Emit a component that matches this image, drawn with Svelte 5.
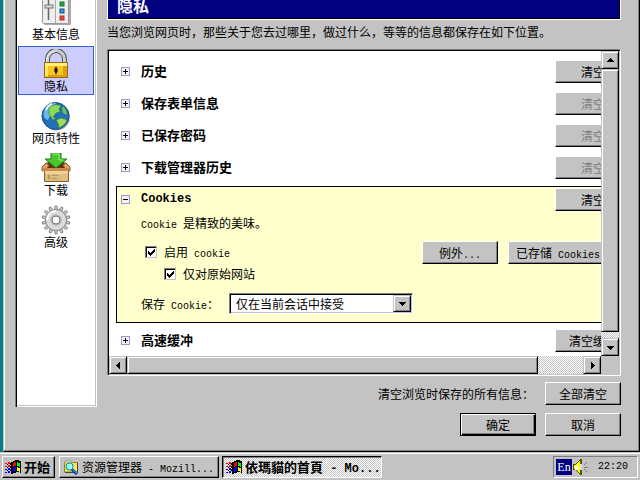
<script lang="ts">
  const categories = [
    { id: 'basic', label: '基本信息' },
    { id: 'privacy', label: '隐私' },
    { id: 'web', label: '网页特性' },
    { id: 'downloads', label: '下载' },
    { id: 'advanced', label: '高级' }
  ];

  const sections = [
    { title: '历史', disabled: false },
    { title: '保存表单信息', disabled: true },
    { title: '已保存密码', disabled: true },
    { title: '下载管理器历史', disabled: true }
  ];

  let selected = 'privacy';
  let enableCookies = true;
  let originalOnly = true;

  const teeth = Array.from({ length: 14 }, (_, i) => (i * 360) / 14);
</script>

{#snippet flag()}
  <svg class="flag" width="17" height="16" viewBox="0 0 17 16" shape-rendering="crispEdges" aria-hidden="true">
    <path fill="#000" d="M6 3h2V2h2V1h4v1h2v12h-1v-1h-4v1H8v1H6z" />
    <path fill="#f00" d="M8 4h1V3h2v4H9v1H8zM0 4h2v1H0zM3 3h2v2H3zM0 7h2v1H0zM3 6h2v2H3z" />
    <path fill="#0f0" d="M12 3h1v1h2v4h-1V7h-2z" />
    <path fill="#00f" d="M8 9h1V8h2v4H9v1H8zM0 10h2v1H0zM3 9h2v2H3zM0 13h2v1H0zM3 12h2v2H3z" />
    <path fill="#ff0" d="M12 8h1v1h2v4h-1v-1h-2z" />
    <path fill="#000" d="M2 5h1v1H2zM5 4h1v2H5zM2 8h1v1H2zM5 7h1v2H5zM2 11h1v1H2zM5 10h1v2H5z" />
  </svg>
{/snippet}

{#snippet arrow(dir)}
  <svg width="7" height="7" viewBox="0 0 7 7" shape-rendering="crispEdges" aria-hidden="true">
    {#if dir === 'up'}
      <path d="M3 1h1v1h1v1h1v1h1v1H0V4h1V3h1V2h1z" />
    {:else if dir === 'down'}
      <path d="M0 2h7v1H6v1H5v1H4v1H3V5H2V4H1V3H0z" />
    {:else if dir === 'left'}
      <path d="M5 0v7H4V6H3V5H2V4H1V3h1V2h1V1h1V0z" />
    {:else}
      <path d="M2 0h1v1h1v1h1v1h1v1H5v1H4v1H3v1H2z" />
    {/if}
  </svg>
{/snippet}

{#snippet toggle(open, name)}
  <button class="toggle" aria-expanded={open} aria-label={name}>
    <svg width="9" height="9" viewBox="0 0 9 9" shape-rendering="crispEdges">
      <rect width="9" height="9" fill="#9a9ad0" />
      <rect x="1" y="1" width="7" height="7" fill="#f2f2f6" />
      <path d={open ? 'M2 4h5v1H2z' : 'M2 4h5v1H2zM4 2h1v5H4z'} />
    </svg>
  </button>
{/snippet}

<div class="desktop">
  <main class="dialog">
    <div class="panes">
      <nav class="sidebar">
        {#each categories as item}
          <button class="category" class:active={selected === item.id} on:click={() => (selected = item.id)}>
            <svg width="30" height="30" viewBox="0 0 30 30" aria-hidden="true">
              {#if item.id === 'basic'}
                <rect x="3" y="1" width="27" height="27" rx="1" fill="#aaa" />
                <rect x="1.5" y="0.500" width="26" height="26" rx="1" fill="#eee" stroke="#999" />
                <path d="M14.500 1v25" stroke="#aaa" />
                <path d="M7.500 2v21" stroke="#666" stroke-width="1.500" />
                <rect x="4" y="8" width="8" height="3" fill="#ddd" stroke="#777" />
                <rect x="19" y="5" width="4" height="4" fill="#2a2" stroke="#175" />
                <rect x="19" y="12" width="4" height="4" fill="#39e" stroke="#157" />
                <rect x="19" y="19" width="4" height="4" fill="#e43" stroke="#a33" />
              {:else if item.id === 'privacy'}
                <path d="M6.500 15V10.500a8 8.500 0 0 1 17 0V15" fill="none" stroke="#555" stroke-width="5" />
                <path d="M6.500 15V10.500a8 8.500 0 0 1 17 0V15" fill="none" stroke="#ccc" stroke-width="3" />
                <path d="M5.500 15V10.500a9 9 0 0 1 8-8" fill="none" stroke="#fff" />
                <rect x="3.500" y="13.500" width="23" height="15" fill="#f6c622" stroke="#96690a" />
                <path d="M4 14h22v3H4z" fill="#fff27c" />
                <path d="M4 17h3v10H4z" fill="#ffe558" />
                <path d="M22 17h4v11H7v-2h15z" fill="#dea016" />
                <path d="M15 17l2 4-2 5-2-5z" fill="#2c1b00" />
              {:else if item.id === 'web'}
                <circle cx="15.500" cy="16" r="13.500" fill="#aaa" />
                <circle cx="14.500" cy="15" r="13.500" fill="#216fb5" stroke="#184f87" />
                <path d="M3 10C5 4 10 2 15 2l-3 7-5 10c-4-1-5-5-4-9z" fill="#69b9ef" />
                <path d="M8 7c3-4 9-4 12-2l-2 3 1 3-4 1-3 4 3 2-3 1-4-6z" fill="#8cdb55" stroke="#347b32" stroke-width=".6" />
                <path d="M15 19l5-2 4 1 2 2-3 4-5 3-1-5z" fill="#a1dc55" stroke="#347b32" stroke-width=".6" />
                <path d="M22 5l3 4 1 5-4-2-1-4z" fill="#73bf49" />
                <path d="M5 9c1-3 3-5 6-6" stroke="#e3f5ff" fill="none" stroke-width="2" />
              {:else if item.id === 'downloads'}
                <path d="M3 13l4-4h16l4 4v3H3z" fill="#633313" />
                <path d="M1 14l4-4 3 2-3 5-4 1zM29 14l-4-4-3 2 3 5 4 1z" fill="#dca765" stroke="#89592f" />
                <path d="M3.500 17.500h24v11h-24z" fill="#d9bd7c" stroke="#866334" />
                <path d="M4 18h23v3H4z" fill="#f0d497" />
                <path d="M21 22h5v6h-5z" fill="#e7bf80" />
                <path d="M7 22h2v4H7zM11 22h6v1h-6zM11 25h5v1h-5z" fill="#b69559" />
                <path d="M2 15h26v3H2z" fill="#c98b4e" />
                <path d="M10 0h10v6h6L15 15 4 6h6z" fill="#4ac52b" stroke="#198018" />
                <path d="M11 1h7v6h4" stroke="#a5f280" fill="none" />
              {:else}
                {#each teeth as angle}
                  <path d="M13.500 5l.5-4h2l.5 4z" fill="#ccc" stroke="#777" stroke-width=".8" transform="rotate({angle} 15 15)" />
                {/each}
                <circle cx="15" cy="15" r="10.500" fill="#ddd" stroke="#888" />
                <path d="M6 15a9 9 0 0 1 9-9" stroke="#fff" stroke-width="2" fill="none" />
                <circle cx="15" cy="15" r="6" fill="#bbb" />
                <circle cx="15" cy="15" r="4" fill="#fff" stroke="#777" />
              {/if}
            </svg>
            <span>{item.label}</span>
          </button>
        {/each}
      </nav>

      <section class="content">
        <h1>隐私</h1>
        <p class="intro">当您浏览网页时，那些关于您去过哪里，做过什么，等等的信息都保存在如下位置。</p>

        <div class="scroll-box">
          <div class="viewport">
            <div class="sections">
              {#each sections as s}
                <div class="row">
                  {@render toggle(false, s.title)}
                  <h2>{s.title}</h2>
                  <button class="btn" disabled={s.disabled}>清空</button>
                </div>
              {/each}

              <div class="cookies">
                <div class="row">
                  {@render toggle(true, 'Cookies')}
                  <h2 class="mono">Cookies</h2>
                  <button class="btn">清空</button>
                </div>
                <p><span class="mono">{'Cookie '}</span>是精致的美味。</p>
                <div class="options">
                  <div class="checks">
                    <label><input type="checkbox" bind:checked={enableCookies} /><span>启用<span class="mono">{' cookie'}</span></span></label>
                    <label class="sub"><input type="checkbox" bind:checked={originalOnly} disabled={!enableCookies} />仅对原始网站</label>
                  </div>
                  <button class="btn">例外<span class="mono">...</span></button>
                  <button class="btn">已存储<span class="mono">{' Cookies'}</span></button>
                </div>
                <div class="keep">
                  <label for="keep">保存<span class="mono">{' Cookie'}</span>：</label>
                  <div class="combo">
                    <select id="keep">
                      <option>仅在当前会话中接受</option>
                    </select>
                    <span class="drop">{@render arrow('down')}</span>
                  </div>
                </div>
              </div>

              <div class="row">
                {@render toggle(false, '高速缓冲')}
                <h2>高速缓冲</h2>
                <button class="btn">清空缓存</button>
              </div>
            </div>
          </div>
          <div class="bar vertical">
            <button class="step" aria-label="向上">{@render arrow('up')}</button>
            <div class="thumb"></div>
            <div class="trough"></div>
            <button class="step" aria-label="向下">{@render arrow('down')}</button>
          </div>
          <div class="bar horizontal">
            <button class="step" aria-label="向左">{@render arrow('left')}</button>
            <div class="thumb"></div>
            <div class="trough"></div>
            <button class="step" aria-label="向右">{@render arrow('right')}</button>
          </div>
        </div>

        <div class="clear-all">
          <span>清空浏览时保存的所有信息：</span>
          <button class="btn">全部清空</button>
        </div>
      </section>
    </div>

    <div class="actions">
      <button class="btn default">确定</button>
      <button class="btn">取消</button>
    </div>
  </main>

  <footer class="taskbar">
    <button class="task start">{@render flag()}开始</button>
    <button class="task">
      <svg width="17" height="16" viewBox="0 0 17 16" aria-hidden="true">
        <path d="M1.500 13V3.500l2-2h4l2 2h5V13z" fill="#ffe85a" stroke="#8a8520" />
        <path d="M2 3l2-2h3l2 2z" fill="#ddd" stroke="#888" stroke-width=".6" />
        <path d="M14.500 4v9.500H2" stroke="#444" fill="none" />
        <circle cx="6.500" cy="7.500" r="3.600" fill="#9ff" stroke="#088" />
        <path d="M9 10.500l5 4.500" stroke="#003aa8" stroke-width="3" />
        <path d="M9.500 10.500l4.500 4" stroke="#5ae" />
      </svg>
      <span>资源管理器<span class="mono">{' - Mozill...'}</span></span>
    </button>
    <button class="task pressed">
      {@render flag()}
      <span class="trad">依瑪貓的首頁<span class="mono">{' - Mo...'}</span></span>
    </button>
    <div class="tray">
      <span class="ime">En</span>
      <svg width="17" height="16" viewBox="0 0 17 16" shape-rendering="crispEdges" aria-hidden="true">
        <path d="M1 5h3V4h1V3h1V2h1V1h1V0h2v16H8v-1H7v-1H6v-1H5v-1H4v-1H1z" fill="#555500" />
        <path d="M2 6h2V5h1V4h1V3h1V2h1v12H7v-1H6v-1H5v-1H4v-1H2z" fill="#ffff00" />
        <path d="M3 7h2V6h1v5H3z" fill="#fff" />
        <path d="M8 5h2v6H8z" fill="#ddd" />
        <path d="M12 5h1V4h1V3h1v1h-1v1h-1v1h-1zM12 8h4v1h-4zM12 10h1v1h1v1h1v1h-1v-1h-1v-1h-1z" fill="#808080" />
      </svg>
      <time class="mono">22:20</time>
    </div>
  </footer>
</div>

<style>
  :global(body) {
    margin: 0;
    overflow: hidden;
  }

  .desktop {
    display: flex;
    flex-direction: column;
    height: 100vh;
    background: #008080;
    color: #000;
    font-family: 'Noto Sans CJK SC', sans-serif;
    font-size: 12px;
    line-height: 16px;
  }

  button,
  select {
    box-sizing: border-box;
    margin: 0;
    padding: 0;
    font: inherit;
    color: inherit;
    border-radius: 0;
  }

  h1,
  h2,
  p {
    margin: 0;
  }

  svg {
    flex: none;
    display: block;
  }

  .mono {
    font-family: 'Liberation Mono', monospace;
    font-size: 10px;
    line-height: 10px;
    white-space: pre;
  }

  .dialog {
    flex: 1;
    min-height: 0;
    display: flex;
    flex-direction: column;
    margin-left: 3px;
    padding: 0 18px 0 10px;
    background: #c3c3c3;
    border: solid #000;
    border-width: 0 1px 1px 0;
    border-left: 1px solid #c3c3c3;
    box-shadow: inset -1px -1px #808080, inset 1px 0 #fff;
  }

  .panes {
    flex: 1;
    min-height: 0;
    display: flex;
    gap: 10px;
    padding-left: 1px;
  }

  .sidebar {
    flex: none;
    display: flex;
    flex-direction: column;
    gap: 3px;
    margin-top: -6px;
    padding: 0 3px 2px 3px;
    width: 76px;
    background: #fff;
    box-shadow: inset 1px 0 #808080, inset 2px 0 #000, inset -1px -1px #fff, inset -2px -2px #c3c3c3;
  }

  .category {
    display: flex;
    flex-direction: column;
    align-items: center;
    height: 49px;
    padding-top: 2px;
    background: none;
    border: 1px solid transparent;
    line-height: 13px;
    white-space: nowrap;
  }

  .category.active {
    background: #ccccff;
    border-color: #3163ce;
  }

  .content {
    flex: 1;
    min-width: 0;
    display: flex;
    flex-direction: column;
  }

  h1 {
    margin-top: -6px;
    padding: 0 9px 2px;
    background: #000080;
    border: 1px solid #fff;
    border-top: 0;
    box-shadow: inset -1px -1px #000;
    color: #fff;
    font-size: 16px;
    line-height: 23px;
  }

  .intro {
    padding: 4px 0 9px;
    white-space: nowrap;
  }

  .scroll-box {
    flex: 1;
    min-height: 0;
    display: grid;
    grid-template-columns: 1fr 18px;
    grid-template-rows: 1fr 18px;
    background: #c3c3c3;
    border: 1px solid #808080;
    border-right-color: #fff;
    border-bottom-color: #fff;
    box-shadow: inset 1px 1px #000;
    padding: 1px;
  }

  .viewport {
    min-width: 0;
    min-height: 0;
    overflow: hidden;
    background: #fff;
  }

  .sections {
    width: 111%;
    box-sizing: border-box;
    padding: 5px 7px 0;
  }

  .row {
    display: flex;
    align-items: center;
    padding: 4px 17px 5px 5px;
  }

  .toggle {
    border: 0;
    background: none;
    margin-right: 11px;
  }

  h2 {
    flex: 1;
    padding-bottom: 2px;
    font-size: 13px;
    line-height: 16px;
  }

  h2.mono {
    font-size: 12px;
  }

  .btn {
    flex: none;
    min-width: 76px;
    height: 23px;
    padding: 0 7px;
    background: #c3c3c3;
    border: 1px solid #fff;
    border-right-color: #000;
    border-bottom-color: #000;
    box-shadow: inset -1px -1px #808080;
    line-height: 16px;
    white-space: nowrap;
  }

  .btn:disabled {
    color: #808080;
  }

  .btn.default {
    border-color: #000;
    box-shadow: inset 1px 1px #fff, inset -1px -1px #000, inset -2px -2px #808080;
  }

  .cookies {
    margin: 2px 0;
    padding: 1px 0 8px;
    background: #ffffce;
    border: 1px solid #000;
  }

  .cookies .row {
    padding: 0 16px 0 4px;
  }

  .cookies p {
    padding: 4px 0 4px 24px;
  }

  .options {
    display: flex;
    gap: 10px;
    margin-top: 6px;
    padding: 0 39px 0 28px;
  }

  .checks {
    flex: 1;
  }

  .checks label {
    display: flex;
    align-items: center;
    gap: 7px;
    height: 22px;
  }

  .checks .sub {
    padding-left: 19px;
  }

  input[type='checkbox'] {
    appearance: none;
    box-sizing: border-box;
    width: 12px;
    height: 12px;
    margin: 0;
    padding: 2px;
    background: #fff;
    border: 1px solid #808080;
    border-right-color: #c3c3c3;
    border-bottom-color: #c3c3c3;
    box-shadow: inset 1px 1px #000;
  }

  input[type='checkbox']:checked::before {
    content: '';
    display: block;
    width: 7px;
    height: 7px;
    background: #000;
    clip-path: polygon(0 2px, 1px 2px, 1px 3px, 2px 3px, 2px 4px, 3px 4px, 3px 3px, 4px 3px, 4px 2px, 5px 2px, 5px 1px, 6px 1px, 6px 0, 7px 0, 7px 3px, 6px 3px, 6px 4px, 5px 4px, 5px 5px, 4px 5px, 4px 6px, 3px 6px, 3px 7px, 2px 7px, 2px 6px, 1px 6px, 1px 5px, 0 5px);
  }

  .keep {
    display: flex;
    align-items: center;
    margin-top: 8px;
    padding-left: 24px;
  }

  .keep label {
    width: 88px;
    white-space: nowrap;
  }

  .combo {
    box-sizing: border-box;
    display: flex;
    width: 184px;
    height: 21px;
    padding: 1px;
    background: #fff;
    border: 1px solid #808080;
    border-right-color: #fff;
    border-bottom-color: #fff;
    box-shadow: inset 1px 1px #000, inset -1px -1px #c3c3c3;
  }

  select {
    flex: 1;
    min-width: 0;
    appearance: none;
    border: 0;
    padding-left: 5px;
    background: transparent;
    line-height: 16px;
  }

  .drop,
  .step,
  .thumb {
    box-sizing: border-box;
    display: flex;
    align-items: center;
    justify-content: center;
    background: #c3c3c3;
    border: 1px solid #c3c3c3;
    border-right-color: #000;
    border-bottom-color: #000;
    box-shadow: inset 1px 1px #fff, inset -1px -1px #808080;
  }

  .drop {
    width: 18px;
    pointer-events: none;
  }

  .bar {
    display: flex;
  }

  .vertical {
    flex-direction: column;
  }

  .step {
    flex: none;
    width: 18px;
    height: 18px;
  }

  .vertical .thumb {
    flex: 44;
  }

  .horizontal .thumb {
    flex: 9;
  }

  .trough {
    flex: 1;
  }

  .trough,
  .pressed {
    background: conic-gradient(#fff 25%, #c3c3c3 0 50%, #fff 0 75%, #c3c3c3 0) 0 0 / 2px 2px;
  }

  .clear-all {
    display: flex;
    justify-content: flex-end;
    align-items: center;
    gap: 11px;
    padding: 6px 0 2px;
  }

  .actions {
    display: flex;
    justify-content: flex-end;
    gap: 9px;
    padding: 6px 0 15px;
  }

  .taskbar {
    display: flex;
    gap: 3px;
    padding: 4px 2px 2px;
    background: #c3c3c3;
    box-shadow: inset 0 1px #c3c3c3, inset 0 2px #fff;
  }

  .task {
    display: flex;
    align-items: center;
    gap: 2px;
    width: 160px;
    height: 22px;
    padding: 0 3px;
    background-color: #c3c3c3;
    border: 1px solid #fff;
    border-right-color: #000;
    border-bottom-color: #000;
    box-shadow: inset -1px -1px #808080;
    white-space: nowrap;
  }

  .task.start {
    width: 53px;
    margin-right: 1px;
    padding: 0 2px;
    font-size: 13px;
    font-weight: bold;
  }

  .task.pressed {
    border-color: #000 #fff #fff #000;
    box-shadow: inset 1px 1px #808080;
    font-size: 13px;
    font-weight: bold;
  }

  .pressed .mono {
    font-size: 12px;
  }

  .trad {
    font-family: 'Noto Sans CJK TC', sans-serif;
  }

  .tray {
    display: flex;
    align-items: center;
    box-sizing: border-box;
    height: 22px;
    margin-left: auto;
    padding: 0 9px 0 2px;
    border: 1px solid #808080;
    border-right-color: #fff;
    border-bottom-color: #fff;
  }

  .ime {
    width: 16px;
    background: #000080;
    color: #fff;
    font-family: 'Liberation Serif', serif;
    text-align: center;
  }

  .tray svg {
    margin-right: 9px;
  }
</style>
